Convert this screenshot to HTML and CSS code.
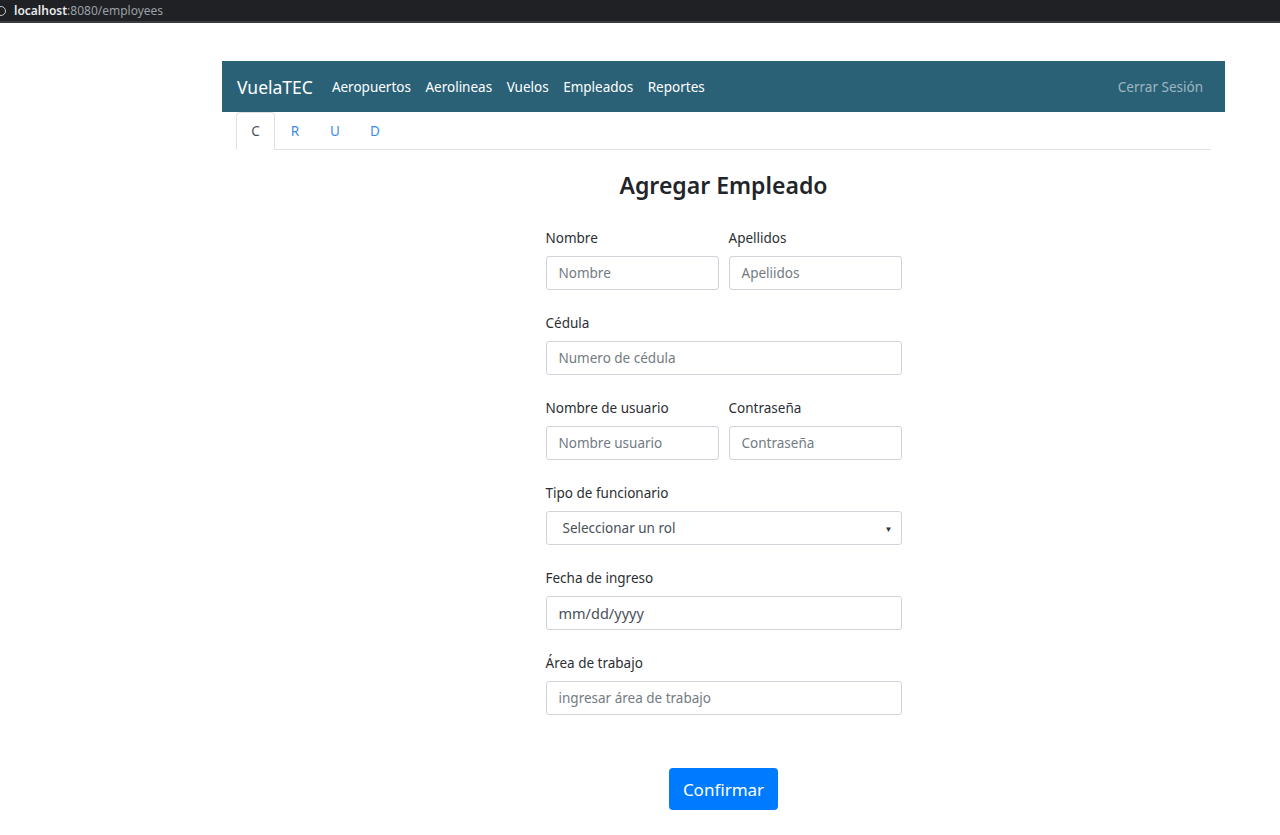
FILE: index.html
```html
<!DOCTYPE html>
<html lang="es">
<head>
<meta charset="utf-8">
<title>VuelaTEC - Empleados</title>
<link rel="stylesheet" href="styles.css">
</head>
<body>
<div class="browserbar">
  <span class="reload"></span>
  <span class="url"><b>localhost</b>:8080/employees</span>
</div>
<div class="page">
  <div class="container">
    <nav class="navbar">
      <div class="nav-left">
        <span class="brand">VuelaTEC</span>
        <a class="nav-link">Aeropuertos</a>
        <a class="nav-link">Aerolineas</a>
        <a class="nav-link">Vuelos</a>
        <a class="nav-link">Empleados</a>
        <a class="nav-link">Reportes</a>
      </div>
      <a class="nav-link logout">Cerrar Sesión</a>
    </nav>
    <ul class="tabs">
      <li class="tab active">C</li>
      <li class="tab">R</li>
      <li class="tab">U</li>
      <li class="tab">D</li>
    </ul>
    <h2 class="title">Agregar Empleado</h2>
    <form class="form">
      <div class="row">
        <div class="group">
          <label>Nombre</label>
          <div class="input placeholder">Nombre</div>
        </div>
        <div class="group">
          <label>Apellidos</label>
          <div class="input placeholder">Apeliidos</div>
        </div>
      </div>
      <div class="group">
        <label>Cédula</label>
        <div class="input placeholder">Numero de cédula</div>
      </div>
      <div class="row">
        <div class="group">
          <label>Nombre de usuario</label>
          <div class="input placeholder">Nombre usuario</div>
        </div>
        <div class="group">
          <label>Contraseña</label>
          <div class="input placeholder">Contraseña</div>
        </div>
      </div>
      <div class="group">
        <label>Tipo de funcionario</label>
        <div class="input select"><span>Seleccionar un rol</span><span class="caret">▼</span></div>
      </div>
      <div class="group">
        <label>Fecha de ingreso</label>
        <div class="input date">mm/dd/yyyy</div>
      </div>
      <div class="group">
        <label>Área de trabajo</label>
        <div class="input placeholder">ingresar área de trabajo</div>
      </div>
      <div class="actions">
        <button type="button" class="btn">Confirmar</button>
      </div>
    </form>
  </div>
</div>
</body>
</html>
```
FILE: styles.css
```css
* { box-sizing: border-box; }
body {
  margin: 0;
  background: #fff;
  font-family: "Noto Sans", "Open Sans", sans-serif;
  color: #212529;
}
.browserbar {
  height: 23px;
  background: #202124;
  display: flex;
  align-items: center;
  font-size: 12px;
  color: #9aa0a6;
  border-bottom: 2px solid #3a3b3e;
}
.reload {
  width: 10px;
  height: 10px;
  border: 1.5px solid #c8c8c8;
  border-radius: 50%;
  margin-left: -4px;
  margin-right: 8px;
}
.url b { color: #e8eaed; font-weight: 600; }
.page { padding-top: 38px; }
.container {
  width: 1003px;
  margin-left: 222px;
}
.navbar {
  height: 51px;
  background: #2a6177;
  display: flex;
  align-items: center;
  justify-content: space-between;
  padding: 0 22px 0 15px;
}
.nav-left { display: flex; align-items: center; }
.brand {
  color: #fff;
  font-size: 17.5px;
  margin-right: 19px;
}
.nav-link {
  color: #fff;
  font-size: 13.5px;
  margin-right: 14.5px;
}
.nav-link.logout { color: rgba(255,255,255,0.55); margin-right: 0; }
.tabs {
  list-style: none;
  margin: 0 14px;
  padding: 0;
  display: flex;
  border-bottom: 1px solid #dee2e6;
  height: 38px;
}
.tab {
  width: 40px;
  height: 38px;
  display: flex;
  align-items: center;
  justify-content: center;
  font-size: 13.5px;
  color: #3d8bf2;
  border: 1px solid transparent;
  border-top-left-radius: 4px;
  border-top-right-radius: 4px;
}
.tab.active {
  color: #495057;
  border-color: #dee2e6 #dee2e6 #fff;
  width: 39px;
  background: #fff;
}
.title {
  text-align: center;
  font-size: 23px;
  font-weight: 600;
  margin: 20px 0 28px;
  line-height: 30px;
}
.form {
  width: 356px;
  margin: 0 auto;
}
.row {
  display: flex;
  gap: 10px;
}
.row .group { flex: 1; }
.group {
  display: flex;
  flex-direction: column;
  margin-bottom: 23px;
}
label {
  font-size: 13.5px;
  line-height: 20px;
  margin-bottom: 8px;
  color: #2b2f33;
}
.input {
  height: 34px;
  border: 1px solid #ced4da;
  border-radius: 3px;
  padding: 0 12px;
  display: flex;
  align-items: center;
  font-size: 13.5px;
  color: #495057;
}
.placeholder { color: #737b82; }
.date { font-size: 14.5px; }
.select {
  justify-content: space-between;
  padding: 0 8px 0 16px;
}
.caret { font-size: 8px; color: #333; }
.actions {
  display: flex;
  justify-content: center;
  padding-top: 30px;
}
.btn {
  width: 109px;
  height: 42px;
  background: #007bff;
  color: #fff;
  border: none;
  border-radius: 4px;
  font-family: inherit;
  font-size: 17px;
}
```
